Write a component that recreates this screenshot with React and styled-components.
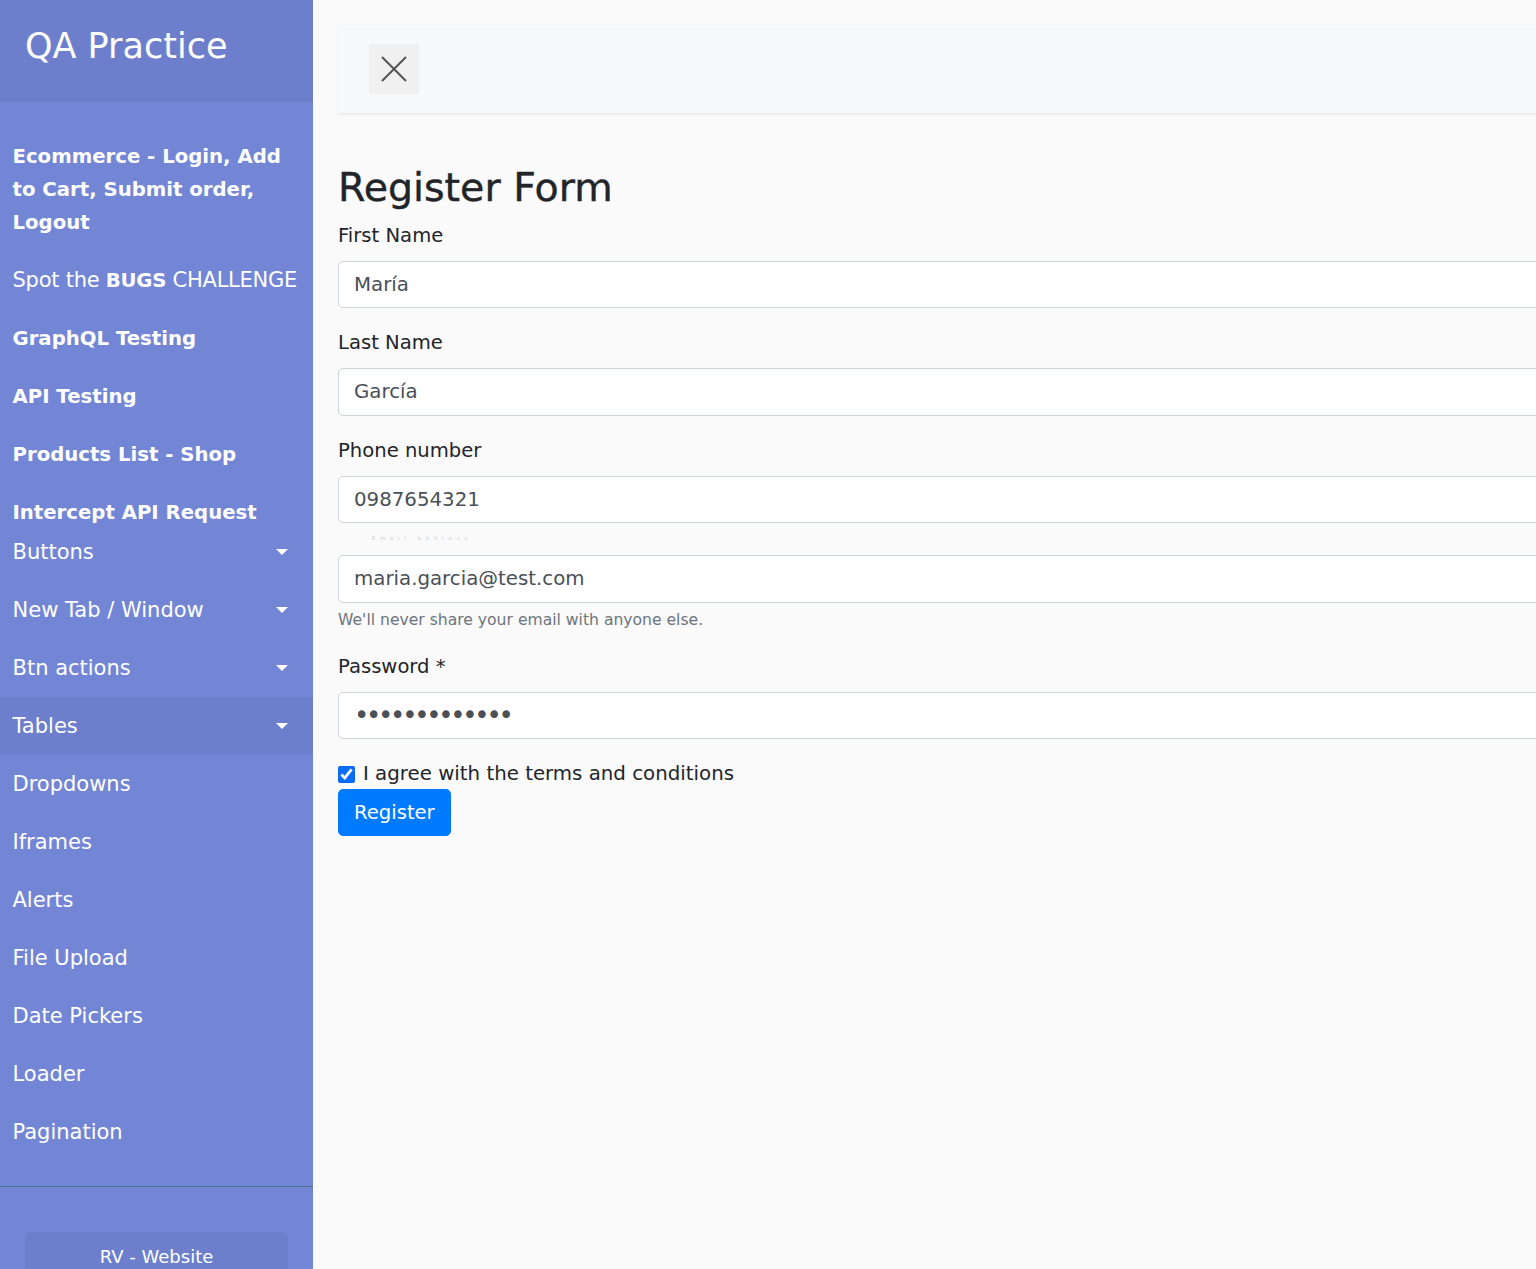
import React from 'react';
import styled, { createGlobalStyle } from 'styled-components';

const GlobalStyle = createGlobalStyle`
  html, body {
    margin: 0;
    padding: 0;
    overflow: hidden;
    background: #fafafa;
    font-family: "DejaVu Sans", "Liberation Sans", sans-serif;
  }
  * {
    box-sizing: border-box;
  }
`;

const Wrapper = styled.div`
  display: flex;
  align-items: stretch;
  min-height: 100vh;
`;

const Sidebar = styled.nav`
  width: 313px;
  flex-shrink: 0;
  background: #7386d5;
  color: #fff;
`;

const SidebarHeader = styled.div`
  padding: 25px;
  background: #6d7fcc;

  h3 {
    margin: 0 0 10px;
    font-size: 35px;
    line-height: 42px;
    font-weight: 400;
  }
`;

const NavList = styled.ul`
  list-style: none;
  margin: 0;
  padding: 25px 0;
  border-bottom: 1px solid #47748b;
`;

const NavItem = styled.li`
  background: ${(p) => (p.$active ? '#6d7fcc' : 'transparent')};
`;

const NavLink = styled.a`
  display: flex;
  align-items: center;
  justify-content: space-between;
  padding: 12.5px;
  padding-bottom: ${(p) => (p.$tight ? '0' : '12.5px')};
  margin-bottom: ${(p) => (p.$tight ? '-5.5px' : '0')};
  color: #fff;
  text-decoration: none;
  font-size: ${(p) => (p.$bold ? '19.7px' : '21px')};
  font-weight: ${(p) => (p.$bold ? 700 : 400)};
  line-height: 33px;
  white-space: ${(p) => (p.$nowrap ? 'nowrap' : 'normal')};
  letter-spacing: ${(p) => (p.$nowrap ? '-0.25px' : 'normal')};

  b {
    font-weight: 700;
    font-size: 19.7px;
  }
`;

const Caret = styled.span`
  flex-shrink: 0;
  width: 0;
  height: 0;
  margin-right: 12.5px;
  border-top: 6.6px solid #fff;
  border-left: 6.6px solid transparent;
  border-right: 6.6px solid transparent;
`;

const Ctas = styled.div`
  padding: 45px 25px 0;
`;

const CtaButton = styled.a`
  display: block;
  padding: 12.5px;
  border-radius: 6px;
  background: #6d7fcc;
  color: #fff;
  text-align: center;
  text-decoration: none;
  font-size: 18px;
  line-height: 24px;
`;

const Content = styled.main`
  width: 1700px;
  flex-shrink: 0;
  padding: 25px;
  background: #fafafa;
`;

const Navbar = styled.div`
  display: flex;
  align-items: center;
  padding: 18.75px 31.25px;
  margin-bottom: 50px;
  background: #f8f9fa;
  box-shadow: 1px 1px 3px rgba(0, 0, 0, 0.1);
`;

const CloseButton = styled.button`
  display: flex;
  align-items: center;
  justify-content: center;
  width: 50px;
  height: 50px;
  padding: 0;
  border: none;
  background: #f0f0f0;
`;

const Title = styled.h2`
  margin: 0 0 10px;
  font-size: 39.5px;
  line-height: 48px;
  font-weight: 400;
  color: #212529;
  -webkit-text-stroke: 0.4px #212529;
`;

const FormGroup = styled.div`
  margin-bottom: 20px;
`;

const Label = styled.label`
  display: block;
  margin-bottom: 10px;
  font-size: 19.6px;
  line-height: 30px;
  color: #212529;
`;

const GhostLabel = styled.label`
  display: block;
  height: 3px;
  margin: -6px 0 15px;
  padding-left: 34px;
  font-size: 5px;
  line-height: 3px;
  letter-spacing: 5px;
  color: #c9c9c9;
`;

const Input = styled.input`
  display: block;
  width: 100%;
  height: 47.5px;
  padding: 7.5px 15px;
  border: 1.25px solid #ced4da;
  border-radius: 5px;
  background: #fff;
  color: #495057;
  font-family: inherit;
  font-size: ${(p) => (p.type === 'password' ? '26px' : '19.8px')};
  letter-spacing: ${(p) => (p.type === 'password' ? '-3.3px' : 'normal')};
  line-height: 30px;
  outline: none;
`;

const Help = styled.small`
  display: block;
  margin-top: 5px;
  font-size: 15.6px;
  line-height: 24px;
  color: #6c757d;
`;

const CheckRow = styled.label`
  display: flex;
  align-items: center;
  gap: 8px;
  font-size: 19.8px;
  line-height: 30px;
  color: #212529;

  input {
    width: 17px;
    height: 17px;
    margin: 0;
    accent-color: #0a6cf5;
  }
`;

const SubmitButton = styled.button`
  padding: 7.5px 15px;
  border: 1.25px solid #007bff;
  border-radius: 5px;
  background: #007bff;
  color: #fff;
  font-family: inherit;
  font-size: 19.6px;
  line-height: 30px;
`;

const navItems = [
  { label: 'Ecommerce - Login, Add to Cart, Submit order, Logout', bold: true },
  { label: 'spot', custom: true },
  { label: 'GraphQL Testing', bold: true },
  { label: 'API Testing', bold: true },
  { label: 'Products List - Shop', bold: true },
  { label: 'Intercept API Request', bold: true, tight: true },
  { label: 'Buttons', caret: true },
  { label: 'New Tab / Window', caret: true },
  { label: 'Btn actions', caret: true },
  { label: 'Tables', caret: true, active: true },
  { label: 'Dropdowns' },
  { label: 'Iframes' },
  { label: 'Alerts' },
  { label: 'File Upload' },
  { label: 'Date Pickers' },
  { label: 'Loader' },
  { label: 'Pagination' },
];

function CloseIcon() {
  return (
    <svg width="26" height="26" viewBox="0 0 26 26">
      <path d="M1 1 L25 25 M25 1 L1 25" stroke="#555" strokeWidth="2" fill="none" />
    </svg>
  );
}

export default function App() {
  return (
    <>
      <GlobalStyle />
      <Wrapper>
        <Sidebar>
          <SidebarHeader>
            <h3>QA Practice</h3>
          </SidebarHeader>
          <NavList>
            {navItems.map((item) => (
              <NavItem key={item.label} $active={item.active}>
                {item.custom ? (
                  <NavLink href="#" $nowrap>
                    <span>
                      Spot the <b>BUGS</b> CHALLENGE
                    </span>
                  </NavLink>
                ) : (
                  <NavLink href="#" $bold={item.bold} $tight={item.tight}>
                    <span>{item.label}</span>
                    {item.caret && <Caret />}
                  </NavLink>
                )}
              </NavItem>
            ))}
          </NavList>
          <Ctas>
            <CtaButton href="#">RV - Website</CtaButton>
          </Ctas>
        </Sidebar>

        <Content>
          <Navbar>
            <CloseButton type="button" aria-label="Close">
              <CloseIcon />
            </CloseButton>
          </Navbar>

          <Title>Register Form</Title>
          <FormGroup>
            <Label>First Name</Label>
            <Input type="text" value="María" readOnly />
          </FormGroup>
          <FormGroup>
            <Label>Last Name</Label>
            <Input type="text" value="García" readOnly />
          </FormGroup>
          <FormGroup>
            <Label>Phone number</Label>
            <Input type="text" value="0987654321" readOnly />
          </FormGroup>
          <GhostLabel>Email address</GhostLabel>
          <FormGroup>
            <Input type="email" value="maria.garcia@test.com" readOnly />
            <Help>We'll never share your email with anyone else.</Help>
          </FormGroup>
          <FormGroup>
            <Label>Password *</Label>
            <Input type="password" value="supersecret12" readOnly />
          </FormGroup>
          <CheckRow>
            <input type="checkbox" defaultChecked />
            I agree with the terms and conditions
          </CheckRow>
          <SubmitButton type="button">Register</SubmitButton>
        </Content>
      </Wrapper>
    </>
  );
}
